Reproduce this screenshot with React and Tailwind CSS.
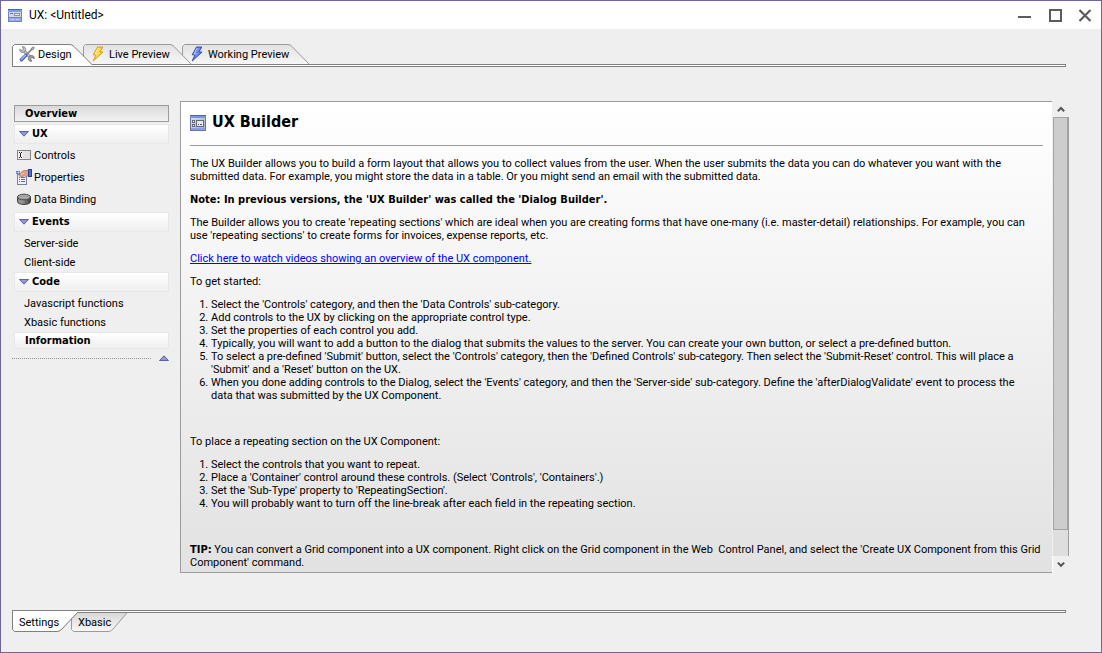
const BOLD = "font-['DejaVu_Sans_Condensed',sans-serif] font-bold";

function FormIcon({ size = 16 }) {
  return (
    <svg width={size} height={size} viewBox="0 0 16 16" shapeRendering="crispEdges" aria-hidden="true">
      <defs>
        <linearGradient id="form-bg" x1="0" y1="0" x2="1" y2="1">
          <stop offset="0" stopColor="#dfe2ee" />
          <stop offset="1" stopColor="#9fa8cc" />
        </linearGradient>
      </defs>
      <rect x="0.5" y="0.5" width="15" height="15" fill="url(#form-bg)" stroke="#6a749c" />
      <rect x="0" y="0" width="16" height="1" fill="#4a63c0" />
      <rect x="0" y="1" width="16" height="2" fill="#7d93e6" />
      <rect x="1" y="13" width="14" height="2" fill="#8a9fe2" />
      <rect x="2" y="5" width="3" height="3" fill="#666a7c" />
      <rect x="3" y="6" width="1" height="1" fill="#fff" />
      <rect x="2" y="9" width="3" height="3" fill="#666a7c" />
      <rect x="3" y="10" width="1" height="1" fill="#fff" />
      <rect x="6.5" y="5.5" width="7" height="6" fill="#e6e8f2" stroke="#666a7c" />
      <rect x="8" y="9" width="1" height="1" fill="#555a70" />
      <rect x="10" y="9" width="2" height="1" fill="#555a70" />
    </svg>
  );
}

function WindowIcon() {
  return (
    <svg width="14" height="13" viewBox="0 0 14 13" shapeRendering="crispEdges" aria-hidden="true">
      <rect width="14" height="13" fill="#7383bd" />
      <rect width="14" height="1" fill="#4564c8" />
      <rect x="0" y="1" width="14" height="2" fill="#7f9bf0" />
      <rect x="1" y="3" width="12" height="5" fill="#d3d6e3" />
      <rect x="2" y="4" width="3" height="1" fill="#70758c" />
      <rect x="6" y="4" width="6" height="3" fill="#8a8e9e" />
      <rect x="7" y="5" width="4" height="1" fill="#f2f2f6" />
      <rect x="1" y="9" width="12" height="3" fill="#93a9ef" />
      <rect x="3" y="10" width="3" height="1" fill="#c8d2f8" />
      <rect x="8" y="10" width="3" height="1" fill="#c8d2f8" />
    </svg>
  );
}

function ToolsIcon() {
  return (
    <svg width="16" height="16" viewBox="0 0 16 16" fill="none" aria-hidden="true">
      <path d="M4.5 4.5 L12 12" stroke="#6e6e6e" strokeWidth="3" />
      <path d="M4.5 4.5 L12 12" stroke="#d4d4d4" strokeWidth="1.4" />
      <path d="M.8 3.2 L3 4.6 L4.6 3 L3.2 .8 C5.6 .2 7.4 2.2 6.4 4.4 L4.6 6.2 C2.2 7 .2 5.4 .8 3.2Z" fill="#c4c4c4" stroke="#777" strokeWidth=".8" />
      <path d="M15.2 12.6 L13 11.4 L11.4 13 L12.8 15.2 C10.4 15.8 8.6 13.8 9.6 11.6 L11.4 9.8 C13.8 9 15.8 10.6 15.2 12.6Z" fill="#a8a8a8" stroke="#606060" strokeWidth=".8" />
      <path d="M7 9 L13.2 2.8" stroke="#8a8a8a" strokeWidth="1.8" />
      <path d="M12 2.6 L14.4 .8 L15.4 1.8 L13.6 4.2Z" fill="#b0b0b0" stroke="#777" strokeWidth=".8" />
      <path d="M2.4 13.8 L6.6 9.6" stroke="#4157b4" strokeWidth="3.4" strokeLinecap="round" />
      <path d="M2.3 13.5 L6.4 9.4" stroke="#a4b5f6" strokeWidth="1.6" strokeLinecap="round" />
    </svg>
  );
}

function BoltIcon({ fill, stroke, shine }) {
  return (
    <svg width="12" height="16" viewBox="0 0 12 16" aria-hidden="true">
      <path d="M5.5 1 H10.8 L7.8 6 H11 L1.2 15 L4 8.8 H1.2 Z" fill={fill} stroke={stroke} strokeLinejoin="round" />
      <path d="M6.2 2 L3 8 H5.2" fill="none" stroke={shine} />
    </svg>
  );
}

function ControlIcon() {
  return (
    <svg width="16" height="16" viewBox="0 0 16 16" shapeRendering="crispEdges" aria-hidden="true">
      <rect x="1.5" y="3.5" width="13" height="9" fill="#f0eeee" stroke="#858585" />
      <rect x="7" y="4" width="7" height="8" fill="#e2e0e0" />
      <rect x="3" y="5" width="1" height="1" fill="#222" />
      <rect x="5" y="5" width="1" height="1" fill="#222" />
      <rect x="4" y="6" width="1" height="4" fill="#222" />
      <rect x="3" y="10" width="1" height="1" fill="#222" />
      <rect x="5" y="10" width="1" height="1" fill="#222" />
    </svg>
  );
}

function PropertiesIcon() {
  return (
    <svg width="16" height="16" viewBox="0 0 16 16" aria-hidden="true">
      <rect x="1.5" y="5.5" width="9" height="10" fill="#eef0f6" stroke="#76809c" />
      <path d="M3 8.5 H4 M5 8.5 H9 M3 10.5 H4 M5 10.5 H9 M3 12.5 H4 M5 12.5 H9" stroke="#66708c" />
      <rect x="0" y="2" width="4" height="3" fill="#5d7be0" />
      <path d="M0 3.5 H4 M2.5 2 V5" stroke="#c7d2fa" strokeWidth=".6" />
      <path d="M3 6.5 L6 2.4 L8.5 1.4 H12.5 V6.4 L9.5 7.8 L8.4 6.6 L5 8 Z" fill="#e2a07e" stroke="#b4735a" strokeWidth=".8" />
      <path d="M5 5.5 L8 4" stroke="#f6cdb4" />
      <rect x="12.5" y="0.5" width="3" height="7" fill="#5470d6" stroke="#2b3f92" />
    </svg>
  );
}

function DatabaseIcon() {
  return (
    <svg width="16" height="16" viewBox="0 0 16 16" aria-hidden="true">
      <defs>
        <linearGradient id="db-side" x1="0" x2="1">
          <stop offset="0" stopColor="#8a8a8a" />
          <stop offset=".35" stopColor="#999" />
          <stop offset="1" stopColor="#3c3c3c" />
        </linearGradient>
      </defs>
      <path d="M1.5 6 V10.5 C1.5 14.4 14.5 14.4 14.5 10.5 V6 Z" fill="url(#db-side)" stroke="#3c3c3c" />
      <ellipse cx="8" cy="6" rx="6.5" ry="2.8" fill="#a6a6a6" stroke="#4a4a4a" />
    </svg>
  );
}

function Triangle({ up }) {
  return (
    <svg width="10" height="6" viewBox="0 0 10 6" aria-hidden="true">
      <path d={up ? "M.5 5.5 H9.5 L5 .8 Z" : "M.5 .5 H9.5 L5 5.2 Z"} fill="#9294dc" stroke="#5254a8" strokeWidth=".9" />
    </svg>
  );
}

function Chevron({ up }) {
  return (
    <svg width="8" height="7" viewBox="0 0 8 7" fill="none" aria-hidden="true">
      <path d={up ? "M.8 5.2 L4 2 L7.2 5.2" : "M.8 1.6 L4 4.8 L7.2 1.6"} stroke="#555" strokeWidth="2" />
    </svg>
  );
}

function TopTab({ width, active, icon, label, layer }) {
  const w = width;
  return (
    <button type="button" role="tab" aria-selected={!!active} className={`relative h-5 shrink-0 text-left ${layer}`} style={{ width: w }}>
      <svg className="absolute left-0 top-0" width={w} height="22" viewBox={`0 0 ${w} 22`} aria-hidden="true">
        <defs>
          <linearGradient id="tab-top" x1="0" y1="0" x2="0" y2="1">
            <stop offset="0" stopColor="#e2e2e2" />
            <stop offset="1" stopColor="#f6f6f6" />
          </linearGradient>
        </defs>
        {active ? (
          <>
            <path d={`M0 22 V3 L3 0 H${w - 21} L${w} 21 V22 Z`} fill="#fff" />
            <path d={`M.5 22 V2.5 L2.5 .5 H${w - 22} Q${w - 20} .5 ${w - 18} 2.5 L${w} 20.5`} fill="none" stroke="#808080" />
          </>
        ) : (
          <path d={`M.5 20 V2.5 L2.5 .5 H${w - 21} Q${w - 19} .5 ${w - 17} 2.5 L${w} 20`} fill="url(#tab-top)" stroke="#9a9a9a" />
        )}
      </svg>
      <span className="relative flex h-5 items-center gap-[3px] pl-[7px]">
        {icon}
        <span>{label}</span>
      </span>
    </button>
  );
}

function BottomTab({ width, active, label, layer }) {
  const w = width;
  return (
    <button type="button" role="tab" aria-selected={!!active} className={`relative h-5 shrink-0 text-left ${layer}`} style={{ width: w }}>
      <svg className="absolute bottom-0 left-0" width={w} height="22" viewBox={`0 0 ${w} 22`} aria-hidden="true">
        <defs>
          <linearGradient id="tab-bottom" x1="0" y1="0" x2="0" y2="1">
            <stop offset="0" stopColor="#d8d8d8" />
            <stop offset="1" stopColor="#f8f8f8" />
          </linearGradient>
        </defs>
        {active ? (
          <>
            <path d={`M.5 0 V18.5 L2.5 20.5 H${w - 20} L${w} 2 V0 Z`} fill="#fff" />
            <path d={`M.5 0 V18.5 L2.5 20.5 H${w - 20} Q${w - 17} 20.5 ${w - 15} 18 L${w} 2`} fill="none" stroke="#808080" />
          </>
        ) : (
          <path d={`M.5 2 V18.5 L2.5 20.5 H${w - 19} Q${w - 16} 20.5 ${w - 14} 18 L${w} 2`} fill="url(#tab-bottom)" stroke="#9a9a9a" />
        )}
      </svg>
      <span className="relative block pl-[7px] leading-5">{label}</span>
    </button>
  );
}

function Section({ label }) {
  return (
    <button type="button" aria-expanded="true" className={`flex h-5 items-center gap-[3px] border border-[#e8e8e8] bg-linear-to-b from-white to-[#efefef] pl-1 leading-[18px] ${BOLD}`}>
      <Triangle />
      {label}
    </button>
  );
}

function IconItem({ icon, label }) {
  return (
    <a href="#" className="flex h-[22px] items-center gap-[2px] pl-[2px]">
      {icon}
      {label}
    </a>
  );
}

function TextItem({ label }) {
  return (
    <a href="#" className="flex h-[19px] items-center pl-[10px] pt-[2px]">
      {label}
    </a>
  );
}

function Steps({ items }) {
  return (
    <ol className="list-decimal pl-[21px]">
      {items.map((lines, i) => (
        <li key={i}>
          {lines.map((line, j) => (
            <span key={j} className="block">{line}</span>
          ))}
        </li>
      ))}
    </ol>
  );
}

const START = [
  ["Select the 'Controls' category, and then the 'Data Controls' sub-category."],
  ["Add controls to the UX by clicking on the appropriate control type."],
  ["Set the properties of each control you add."],
  ["Typically, you will want to add a button to the dialog that submits the values to the server. You can create your own button, or select a pre-defined button."],
  [
    "To select a pre-defined 'Submit' button, select the 'Controls' category, then the 'Defined Controls' sub-category. Then select the 'Submit-Reset' control. This will place a",
    "'Submit' and a 'Reset' button on the UX.",
  ],
  [
    "When you done adding controls to the Dialog, select the 'Events' category, and then the 'Server-side' sub-category. Define the 'afterDialogValidate' event to process the",
    "data that was submitted by the UX Component.",
  ],
];

const REPEAT = [
  ["Select the controls that you want to repeat."],
  ["Place a 'Container' control around these controls. (Select 'Controls', 'Containers'.)"],
  ["Set the 'Sub-Type' property to 'RepeatingSection'."],
  ["You will probably want to turn off the line-break after each field in the repeating section."],
];

export default function App() {
  return (
    <div className="flex min-h-screen flex-col border border-[#6a67a3] bg-[#efefef] font-[Roboto,sans-serif] text-[11px] leading-[13px] text-black">
      <header className="flex h-7 items-center bg-white pl-[7px] pr-[9px]">
        <WindowIcon />
        <h1 className="ml-[7px] flex-1 text-[12px]">UX: &lt;Untitled&gt;</h1>
        <div className="flex items-center gap-4 pt-[2px]">
          <button type="button" aria-label="Minimize">
            <svg width="14" height="14" viewBox="0 0 14 14" aria-hidden="true"><rect x="0" y="7" width="13" height="2" fill="#5c5c5c" /></svg>
          </button>
          <button type="button" aria-label="Maximize">
            <svg width="14" height="14" viewBox="0 0 14 14" aria-hidden="true"><rect x="2" y="1" width="11" height="11" fill="none" stroke="#5c5c5c" strokeWidth="2" /></svg>
          </button>
          <button type="button" aria-label="Close">
            <svg width="14" height="14" viewBox="0 0 14 14" aria-hidden="true"><path d="M1.5 1 L12.5 12 M12.5 1 L1.5 12" stroke="#5c5c5c" strokeWidth="2.2" fill="none" /></svg>
          </button>
        </div>
      </header>

      <div className="ml-[11px] mr-[35px] mt-[15px]">
        <div role="tablist" className="flex">
          <TopTab width={80} active layer="z-30" label="Design" icon={<ToolsIcon />} />
          <div className="-ml-[9px] flex">
            <TopTab width={108} layer="z-20" label="Live Preview" icon={<span className="px-[2px]"><BoltIcon fill="#ffd84a" stroke="#d8961c" shine="#fff3b0" /></span>} />
          </div>
          <div className="-ml-[9px] flex">
            <TopTab width={127} layer="z-10" label="Working Preview" icon={<span className="px-[2px]"><BoltIcon fill="#6f8cf2" stroke="#2f48b4" shine="#c2cffc" /></span>} />
          </div>
        </div>
        <div className="h-[3px] border border-[#808080] bg-white" />
      </div>

      <main className="mb-[37px] ml-[11px] mr-[32px] mt-[34px] flex flex-1 gap-[11px]">
        <nav className="w-[157px] shrink-0 pt-1">
          <div className="flex flex-col pl-[2px]">
            <a href="#" aria-current="page" className={`mb-[2px] flex h-[17px] items-center border border-[#9c9c9c] bg-linear-to-b from-[#dadada] to-[#f2f2f2] pl-[10px] ${BOLD}`}>
              Overview
            </a>
            <Section label="UX" />
            <IconItem icon={<ControlIcon />} label="Controls" />
            <IconItem icon={<PropertiesIcon />} label="Properties" />
            <IconItem icon={<DatabaseIcon />} label="Data Binding" />
            <div className="flex flex-col pb-px pt-[2px]"><Section label="Events" /></div>
            <TextItem label="Server-side" />
            <TextItem label="Client-side" />
            <div className="flex flex-col py-px"><Section label="Code" /></div>
            <TextItem label="Javascript functions" />
            <TextItem label="Xbasic functions" />
            <a href="#" className={`mt-px flex h-[17px] items-center border border-[#e8e8e8] bg-linear-to-b from-white to-[#efefef] pl-[10px] ${BOLD}`}>
              Information
            </a>
          </div>
          <div className="mt-[6px] flex items-center justify-between">
            <div className="w-[139px] border-t border-dotted border-[#909090]" />
            <button type="button" aria-label="Collapse all" className="flex"><Triangle up /></button>
          </div>
        </nav>

        <div className="flex min-w-0 flex-1">
          <article className="min-w-0 flex-1 border-y border-l border-[#9c9c9c] bg-linear-to-b from-white to-[#e2e2e2] px-[9px]">
            <div className="flex h-11 items-center gap-[6px] border-b border-[#9c9c9c] pb-px">
              <FormIcon />
              <h2 className={`pb-[2px] text-[16px] leading-5 ${BOLD}`}>UX Builder</h2>
            </div>
            <div className="flex flex-col gap-[10px] pt-[11px]">
              <p>
                The UX Builder allows you to build a form layout that allows you to collect values from the user. When the user submits the data you can do whatever you want with the<br />
                submitted data. For example, you might store the data in a table. Or you might send an email with the submitted data.
              </p>
              <p className={BOLD}>Note: In previous versions, the 'UX Builder' was called the 'Dialog Builder'.</p>
              <p>
                The Builder allows you to create 'repeating sections' which are ideal when you are creating forms that have one-many (i.e. master-detail) relationships. For example, you can<br />
                use 'repeating sections' to create forms for invoices, expense reports, etc.
              </p>
              <p><a href="#" className="text-[#0000ff] underline">Click here to watch videos showing an overview of the UX component.</a></p>
              <p>To get started:</p>
              <Steps items={START} />
              <p className="pt-[23px]">To place a repeating section on the UX Component:</p>
              <Steps items={REPEAT} />
              <p className="pt-[23px]">
                <strong className={BOLD}>TIP:</strong> You can convert a Grid component into a UX component. Right click on the Grid component in the Web &nbsp;Control Panel, and select the 'Create UX Component from this Grid<br />
                Component' command.
              </p>
            </div>
          </article>
          <div className="flex w-[17px] shrink-0 flex-col">
            <button type="button" aria-label="Scroll up" className="flex h-4 items-center justify-center"><Chevron up /></button>
            <div className="ml-px flex flex-1 flex-col border-r border-[#9c9c9c] bg-[#dedede]">
              <div className="flex-[16] border border-[#a4a4a4] bg-[#cdcdcd]" />
              <div className="flex-1" />
            </div>
            <button type="button" aria-label="Scroll down" className="flex h-[17px] items-center justify-center border-l border-white"><Chevron /></button>
          </div>
        </div>
      </main>

      <div className="mb-[19px] ml-[11px] mr-[35px]">
        <div className="h-[3px] border border-[#808080] bg-white" />
        <div role="tablist" className="flex">
          <BottomTab width={65} active layer="z-20" label="Settings" />
          <div className="-ml-[6px] flex">
            <BottomTab width={56} layer="z-10" label="Xbasic" />
          </div>
        </div>
      </div>
    </div>
  );
}
